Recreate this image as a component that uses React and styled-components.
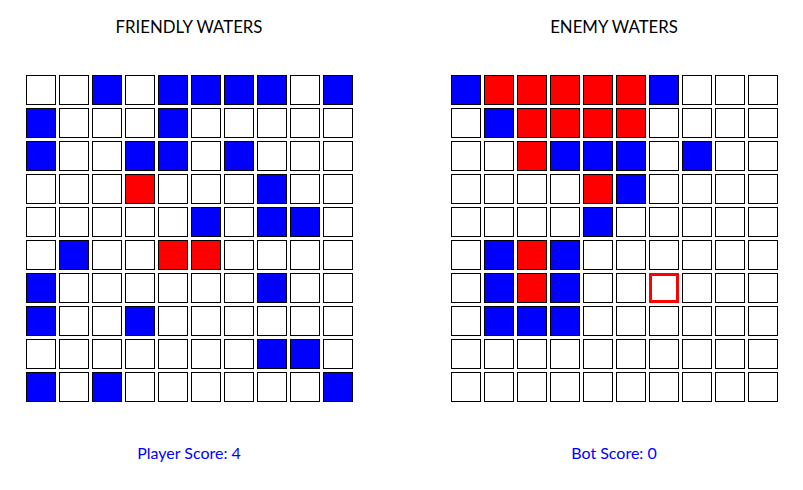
import React from "react";
import styled, { createGlobalStyle } from "styled-components";

const GlobalStyle = createGlobalStyle`
	html, body {
		margin: 0;
		padding: 0;
		background: #ffffff;
	}
	body {
		font-family: "Segoe UI", Lato, "Open Sans", sans-serif;
	}
`;

const Page = styled.div`
	display: flex;
	justify-content: center;
	gap: 98px;
	padding-top: 14px;
`;

const Board = styled.section`
	display: flex;
	flex-direction: column;
	align-items: center;
	width: 327px;
`;

const Title = styled.h2`
	margin: 0;
	height: 61px;
	font-size: 16.8px;
	font-weight: 400;
	line-height: 25px;
	color: #000000;
`;

const Grid = styled.div`
	display: grid;
	grid-template-columns: repeat(10, 30px);
	grid-auto-rows: 30px;
	gap: 3px;
`;

const colors = {
	".": "#ffffff",
	B: "#0000ff",
	R: "#ff0000",
	T: "#ffffff",
};

const Cell = styled.div`
	box-sizing: border-box;
	background: ${(p) => colors[p.$state]};
	border: ${(p) => (p.$state === "T" ? "3px solid #ff0000" : "1px solid #000000")};
`;

const Score = styled.p`
	margin: 40px 0 0;
	font-size: 16px;
	line-height: 22px;
	color: #0000ff;
`;

const friendly = [
	"..B.BBBB.B",
	"B...B.....",
	"B..BB.B...",
	"...R...B..",
	".....B.BB.",
	".B..RR....",
	"B......B..",
	"B..B......",
	".......BB.",
	"B.B......B",
];

const enemy = [
	"BRRRRRB...",
	".BRRRR....",
	"..RBBB.B..",
	"....RB....",
	"....B.....",
	".BRB......",
	".BRB..T...",
	".BBB......",
	"..........",
	"..........",
];

function Waters({ title, rows, score }) {
	return (
		<Board>
			<Title>{title}</Title>
			<Grid>
				{rows.map((row, r) =>
					row.split("").map((s, c) => <Cell key={`${r}-${c}`} $state={s} />)
				)}
			</Grid>
			<Score>{score}</Score>
		</Board>
	);
}

export default function App() {
	return (
		<>
			<GlobalStyle />
			<Page>
				<Waters title="FRIENDLY WATERS" rows={friendly} score="Player Score: 4" />
				<Waters title="ENEMY WATERS" rows={enemy} score="Bot Score: 0" />
			</Page>
		</>
	);
}
